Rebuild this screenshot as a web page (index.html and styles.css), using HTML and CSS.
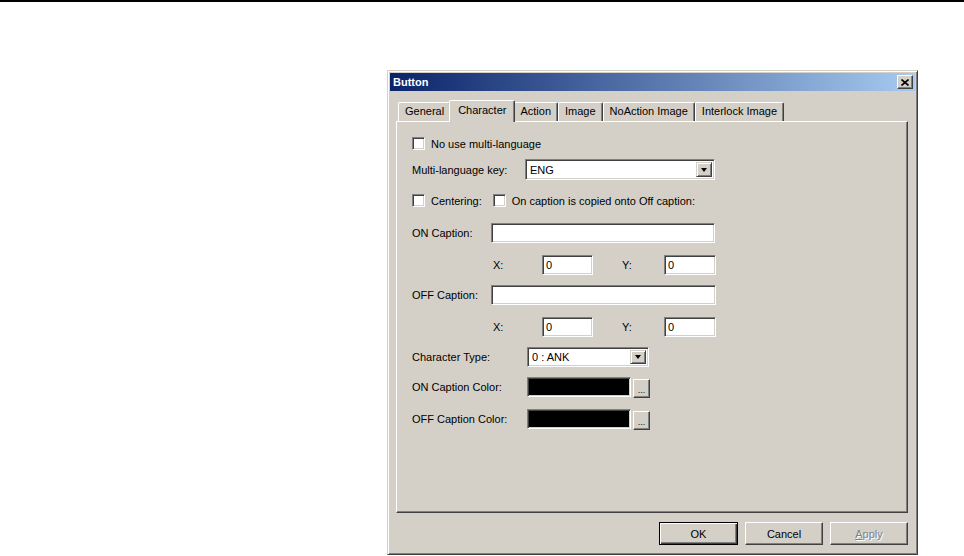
FILE: index.html
```html
<!DOCTYPE html>
<html lang="en">
<head>
  <meta charset="UTF-8">
  <title>Button</title>
  <link rel="stylesheet" href="styles.css">
</head>
<body>
  <div class="topline"></div>
  <div class="dialog">
    <div class="titlebar">
      <span class="title">Button</span>
      <span class="close-btn">
        <svg width="8" height="7" viewBox="0 0 8 7"><path d="M0.5 0.5 L7.5 6.5 M7.5 0.5 L0.5 6.5" stroke="#000" stroke-width="1.6" fill="none"/></svg>
      </span>
    </div>
    <div class="dialog-body">
      <div class="tabs">
        <div class="tab">General</div>
        <div class="tab active">Character</div>
        <div class="tab">Action</div>
        <div class="tab">Image</div>
        <div class="tab">NoAction Image</div>
        <div class="tab">Interlock Image</div>
      </div>
      <div class="panel">
        <div class="row row-check">
          <span class="checkbox"></span>
          <span class="check-label">No use multi-language</span>
        </div>
        <div class="row row-lang">
          <span class="label w-lang">Multi-language key:</span>
          <div class="select w-190"><span class="select-text">ENG</span><span class="drop-btn"><span class="arrow"></span></span></div>
        </div>
        <div class="row row-center">
          <span class="checkbox"></span>
          <span class="check-label">Centering:</span>
          <span class="checkbox second"></span>
          <span class="check-label">On caption is copied onto Off caption:</span>
        </div>
        <div class="row row-on">
          <span class="label w-cap">ON Caption:</span>
          <span class="textbox w-224"></span>
        </div>
        <div class="row row-xy">
          <span class="label xy-x">X:</span>
          <span class="textbox w-51">0</span>
          <span class="label xy-y">Y:</span>
          <span class="textbox w-52">0</span>
        </div>
        <div class="row row-off">
          <span class="label w-cap">OFF Caption:</span>
          <span class="textbox w-225"></span>
        </div>
        <div class="row row-xy">
          <span class="label xy-x">X:</span>
          <span class="textbox w-51">0</span>
          <span class="label xy-y">Y:</span>
          <span class="textbox w-52">0</span>
        </div>
        <div class="row row-type">
          <span class="label w-type">Character Type:</span>
          <div class="select w-122"><span class="select-text">0 : ANK</span><span class="drop-btn"><span class="arrow"></span></span></div>
        </div>
        <div class="row row-color">
          <span class="label w-type">ON Caption Color:</span>
          <span class="swatch"></span>
          <span class="dots-btn">...</span>
        </div>
        <div class="row row-color2">
          <span class="label w-type">OFF Caption Color:</span>
          <span class="swatch"></span>
          <span class="dots-btn">...</span>
        </div>
      </div>
      <div class="footer">
        <span class="btn btn-default">OK</span>
        <span class="btn">Cancel</span>
        <span class="btn btn-disabled"><u>A</u>pply</span>
      </div>
    </div>
  </div>
</body>
</html>
```

FILE: styles.css
```css
* {
  box-sizing: border-box;
}
body {
  margin: 0;
  background: #fff;
  font-family: "Liberation Sans", Arial, sans-serif;
  font-size: 11px;
  color: #000;
}
.topline {
  height: 2px;
  background: #000;
}
.dialog {
  width: 531px;
  height: 485px;
  margin: 68px 0 0 387px;
  padding: 2px;
  background: #d4d0c8;
  border: 1px solid;
  border-color: #d4d0c8 #404040 #404040 #d4d0c8;
  box-shadow: inset 1px 1px #fff, inset -1px -1px #808080;
}
.titlebar {
  height: 18px;
  display: flex;
  align-items: center;
  justify-content: space-between;
  padding: 0 2px 0 3px;
  background: linear-gradient(to right, #0a246a, #a6caf0);
}
.title {
  color: #fff;
  font-weight: bold;
  font-size: 11px;
}
.close-btn {
  width: 16px;
  height: 14px;
  display: flex;
  align-items: center;
  justify-content: center;
  background: #d4d0c8;
  border: 1px solid;
  border-color: #fff #404040 #404040 #fff;
  box-shadow: inset -1px -1px #808080;
}
.dialog-body {
  padding: 9px 7px 0 6px;
}
.tabs {
  display: flex;
  align-items: flex-end;
  height: 21px;
  padding-left: 2px;
}
.tab {
  height: 19px;
  line-height: 17px;
  padding: 0 6px;
  border: 1px solid;
  border-bottom: none;
  border-color: #fff #404040 transparent #fff;
  border-radius: 2px 2px 0 0;
  box-shadow: inset -1px 0 #808080;
  white-space: nowrap;
}
.tab.active {
  position: relative;
  z-index: 1;
  height: 22px;
  margin: 0 -2px -1px;
  padding: 0 8px;
  line-height: 19px;
  background: #d4d0c8;
}
.panel {
  height: 392px;
  padding: 15px 0 0 15px;
  border: 1px solid;
  border-color: #fff #404040 #404040 #fff;
  box-shadow: inset -1px -1px #808080;
}
.row {
  display: flex;
  align-items: center;
  height: 20px;
}
.row-check {
  height: 13px;
}
.row-lang {
  height: 21px;
  margin-top: 9px;
}
.row-center {
  height: 13px;
  margin-top: 14px;
}
.row-on {
  margin-top: 16px;
}
.row-xy {
  margin-top: 12px;
}
.row-off {
  margin-top: 10px;
}
.row-type {
  margin-top: 10px;
}
.row-color {
  margin-top: 10px;
  align-items: flex-start;
}
.row-color2 {
  margin-top: 12px;
  align-items: flex-start;
}
.row-color .label,
.row-color2 .label {
  line-height: 20px;
}
.checkbox {
  width: 13px;
  height: 13px;
  background: #fff;
  border: 1px solid;
  border-color: #808080 #fff #fff #808080;
  box-shadow: inset 1px 1px #404040, inset -1px -1px #d4d0c8;
}
.checkbox.second {
  margin-left: 11px;
}
.check-label {
  margin-left: 6px;
  white-space: nowrap;
}
.label {
  white-space: nowrap;
}
.w-lang {
  width: 113px;
}
.w-cap {
  width: 79px;
}
.w-type {
  width: 115px;
}
.xy-x {
  margin-left: 81px;
  width: 49px;
}
.xy-y {
  margin-left: 29px;
  width: 42px;
}
.textbox,
.select {
  height: 100%;
  display: flex;
  align-items: center;
  padding-left: 3px;
  background: #fff;
  border: 1px solid;
  border-color: #808080 #fff #fff #808080;
  box-shadow: inset 1px 1px #404040, inset -1px -1px #d4d0c8;
}
.select {
  justify-content: space-between;
  padding: 2px 2px 2px 4px;
}
.w-190 { width: 190px; }
.w-122 { width: 122px; }
.w-224 { width: 224px; }
.w-225 { width: 225px; }
.w-51 { width: 51px; }
.w-52 { width: 52px; }
.drop-btn {
  width: 16px;
  height: 100%;
  display: flex;
  align-items: center;
  justify-content: center;
  background: #d4d0c8;
  border: 1px solid;
  border-color: #d4d0c8 #404040 #404040 #d4d0c8;
  box-shadow: inset 1px 1px #fff, inset -1px -1px #808080;
}
.arrow {
  width: 0;
  height: 0;
  border-left: 3.5px solid transparent;
  border-right: 3.5px solid transparent;
  border-top: 4px solid #000;
}
.swatch {
  width: 104px;
  height: 20px;
  background: #000;
  border: 1px solid;
  border-color: #808080 #fff #fff #808080;
  box-shadow: inset 1px 1px #404040, inset -1px -1px #d4d0c8;
}
.dots-btn {
  width: 17px;
  height: 19px;
  margin: 2px 0 0 2px;
  display: flex;
  align-items: flex-end;
  justify-content: center;
  padding-bottom: 2px;
  font-size: 9px;
  line-height: 9px;
  background: #d4d0c8;
  border: 1px solid;
  border-color: #fff #404040 #404040 #fff;
  box-shadow: inset -1px -1px #808080;
}
.footer {
  display: flex;
  justify-content: flex-end;
  gap: 7px;
  margin-top: 9px;
}
.btn {
  width: 78px;
  height: 23px;
  display: flex;
  align-items: center;
  justify-content: center;
  background: #d4d0c8;
  border: 1px solid;
  border-color: #fff #404040 #404040 #fff;
  box-shadow: inset -1px -1px #808080;
}
.btn-default {
  width: 79px;
  border: 1px solid #000;
  box-shadow: inset 1px 1px #fff, inset -1px -1px #404040, inset -2px -2px #808080;
}
.btn-disabled {
  color: #808080;
  text-shadow: 1px 1px #fff;
}
```
